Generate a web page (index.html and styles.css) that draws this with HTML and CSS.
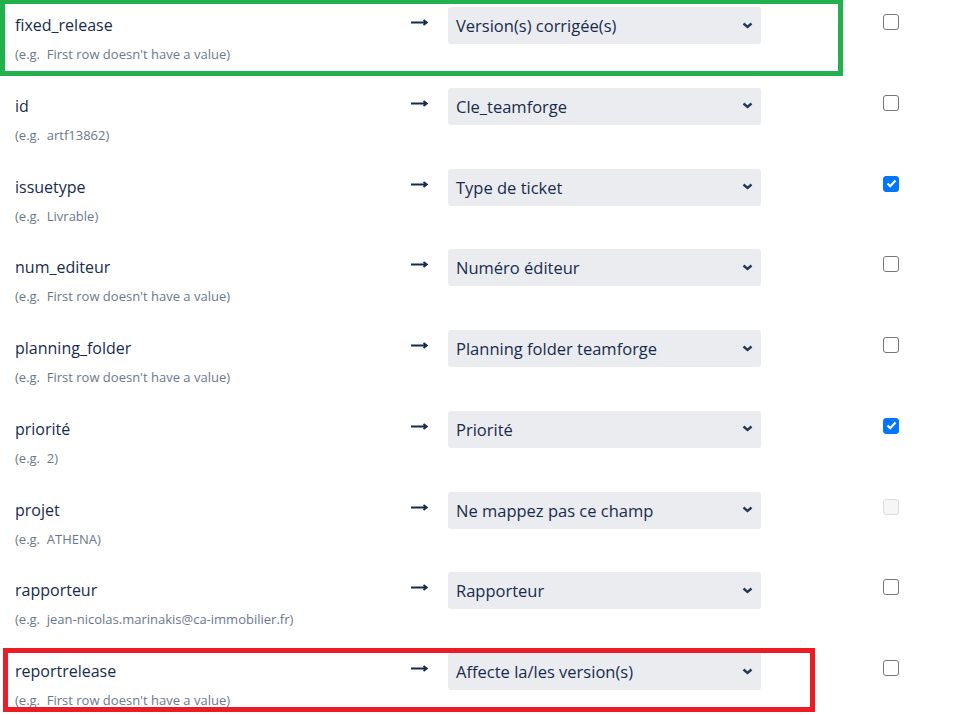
FILE: index.html
```html
<!DOCTYPE html>
<html lang="fr">
<head>
<meta charset="utf-8">
<title>Mappage des champs</title>
<link rel="stylesheet" href="styles.css">
</head>
<body>
<div class="list">
  <div class="row">
    <div class="field"><div class="name">fixed_release</div><div class="hint">(e.g.&nbsp; First row doesn't have a value)</div></div>
    <div class="arrow"><svg width="17" height="9" viewBox="0 0 17 9"><path d="M0 4.5H15.5M12.5 2L15.8 4.5L12.5 7" fill="none" stroke="#172b4d" stroke-width="1.8"/></svg></div>
    <div class="select"><span>Version(s) corrigée(s)</span><svg class="chev" width="11" height="7" viewBox="0 0 11 7"><path d="M1.5 1.5L5.5 5L9.5 1.5" fill="none" stroke="#253858" stroke-width="2.4"/></svg></div>
    <div class="cb"><span class="box"></span></div>
  </div>
  <div class="row">
    <div class="field"><div class="name">id</div><div class="hint">(e.g.&nbsp; artf13862)</div></div>
    <div class="arrow"><svg width="17" height="9" viewBox="0 0 17 9"><path d="M0 4.5H15.5M12.5 2L15.8 4.5L12.5 7" fill="none" stroke="#172b4d" stroke-width="1.8"/></svg></div>
    <div class="select"><span>Cle_teamforge</span><svg class="chev" width="11" height="7" viewBox="0 0 11 7"><path d="M1.5 1.5L5.5 5L9.5 1.5" fill="none" stroke="#253858" stroke-width="2.4"/></svg></div>
    <div class="cb"><span class="box"></span></div>
  </div>
  <div class="row">
    <div class="field"><div class="name">issuetype</div><div class="hint">(e.g.&nbsp; Livrable)</div></div>
    <div class="arrow"><svg width="17" height="9" viewBox="0 0 17 9"><path d="M0 4.5H15.5M12.5 2L15.8 4.5L12.5 7" fill="none" stroke="#172b4d" stroke-width="1.8"/></svg></div>
    <div class="select"><span>Type de ticket</span><svg class="chev" width="11" height="7" viewBox="0 0 11 7"><path d="M1.5 1.5L5.5 5L9.5 1.5" fill="none" stroke="#253858" stroke-width="2.4"/></svg></div>
    <div class="cb"><span class="box checked"><svg width="11" height="9" viewBox="0 0 11 9"><path d="M1.5 4.5L4.2 7.2L9.5 1.5" fill="none" stroke="#fff" stroke-width="2.2"/></svg></span></div>
  </div>
  <div class="row">
    <div class="field"><div class="name">num_editeur</div><div class="hint">(e.g.&nbsp; First row doesn't have a value)</div></div>
    <div class="arrow"><svg width="17" height="9" viewBox="0 0 17 9"><path d="M0 4.5H15.5M12.5 2L15.8 4.5L12.5 7" fill="none" stroke="#172b4d" stroke-width="1.8"/></svg></div>
    <div class="select"><span>Numéro éditeur</span><svg class="chev" width="11" height="7" viewBox="0 0 11 7"><path d="M1.5 1.5L5.5 5L9.5 1.5" fill="none" stroke="#253858" stroke-width="2.4"/></svg></div>
    <div class="cb"><span class="box"></span></div>
  </div>
  <div class="row">
    <div class="field"><div class="name">planning_folder</div><div class="hint">(e.g.&nbsp; First row doesn't have a value)</div></div>
    <div class="arrow"><svg width="17" height="9" viewBox="0 0 17 9"><path d="M0 4.5H15.5M12.5 2L15.8 4.5L12.5 7" fill="none" stroke="#172b4d" stroke-width="1.8"/></svg></div>
    <div class="select"><span>Planning folder teamforge</span><svg class="chev" width="11" height="7" viewBox="0 0 11 7"><path d="M1.5 1.5L5.5 5L9.5 1.5" fill="none" stroke="#253858" stroke-width="2.4"/></svg></div>
    <div class="cb"><span class="box"></span></div>
  </div>
  <div class="row">
    <div class="field"><div class="name">priorité</div><div class="hint">(e.g.&nbsp; 2)</div></div>
    <div class="arrow"><svg width="17" height="9" viewBox="0 0 17 9"><path d="M0 4.5H15.5M12.5 2L15.8 4.5L12.5 7" fill="none" stroke="#172b4d" stroke-width="1.8"/></svg></div>
    <div class="select"><span>Priorité</span><svg class="chev" width="11" height="7" viewBox="0 0 11 7"><path d="M1.5 1.5L5.5 5L9.5 1.5" fill="none" stroke="#253858" stroke-width="2.4"/></svg></div>
    <div class="cb"><span class="box checked"><svg width="11" height="9" viewBox="0 0 11 9"><path d="M1.5 4.5L4.2 7.2L9.5 1.5" fill="none" stroke="#fff" stroke-width="2.2"/></svg></span></div>
  </div>
  <div class="row">
    <div class="field"><div class="name">projet</div><div class="hint">(e.g.&nbsp; ATHENA)</div></div>
    <div class="arrow"><svg width="17" height="9" viewBox="0 0 17 9"><path d="M0 4.5H15.5M12.5 2L15.8 4.5L12.5 7" fill="none" stroke="#172b4d" stroke-width="1.8"/></svg></div>
    <div class="select"><span>Ne mappez pas ce champ</span><svg class="chev" width="11" height="7" viewBox="0 0 11 7"><path d="M1.5 1.5L5.5 5L9.5 1.5" fill="none" stroke="#253858" stroke-width="2.4"/></svg></div>
    <div class="cb"><span class="box disabled"></span></div>
  </div>
  <div class="row">
    <div class="field"><div class="name">rapporteur</div><div class="hint">(e.g.&nbsp; jean-nicolas.marinakis@ca-immobilier.fr)</div></div>
    <div class="arrow"><svg width="17" height="9" viewBox="0 0 17 9"><path d="M0 4.5H15.5M12.5 2L15.8 4.5L12.5 7" fill="none" stroke="#172b4d" stroke-width="1.8"/></svg></div>
    <div class="select"><span>Rapporteur</span><svg class="chev" width="11" height="7" viewBox="0 0 11 7"><path d="M1.5 1.5L5.5 5L9.5 1.5" fill="none" stroke="#253858" stroke-width="2.4"/></svg></div>
    <div class="cb"><span class="box"></span></div>
  </div>
  <div class="row">
    <div class="field"><div class="name">reportrelease</div><div class="hint">(e.g.&nbsp; First row doesn't have a value)</div></div>
    <div class="arrow"><svg width="17" height="9" viewBox="0 0 17 9"><path d="M0 4.5H15.5M12.5 2L15.8 4.5L12.5 7" fill="none" stroke="#172b4d" stroke-width="1.8"/></svg></div>
    <div class="select"><span>Affecte la/les version(s)</span><svg class="chev" width="11" height="7" viewBox="0 0 11 7"><path d="M1.5 1.5L5.5 5L9.5 1.5" fill="none" stroke="#253858" stroke-width="2.4"/></svg></div>
    <div class="cb"><span class="box"></span></div>
  </div>
</div>
<div class="mark mark-green"></div>
<div class="mark mark-red"></div>
</body>
</html>
```

FILE: styles.css
```css
html, body {
  margin: 0;
  padding: 0;
  background: #ffffff;
}
body {
  font-family: "Open Sans", "Noto Sans", "Liberation Sans", sans-serif;
  color: #172b4d;
  position: relative;
  width: 972px;
  height: 715px;
  overflow: hidden;
}
.list {
  padding-left: 15px;
}
.row {
  display: grid;
  grid-template-columns: 396px 37px 313px 1fr;
  height: 80.75px;
  align-items: start;
}
.field {
  padding-top: 14px;
}
.name {
  font-size: 16px;
  line-height: 22px;
  color: #172b4d;
}
.hint {
  margin-top: 10px;
  font-size: 13px;
  line-height: 17px;
  color: #6b778c;
  white-space: nowrap;
}
.arrow {
  padding-top: 18px;
}
.arrow svg {
  display: block;
}
.select {
  margin-top: 7px;
  height: 37px;
  box-sizing: border-box;
  background: #ebecf0;
  border-radius: 3px;
  display: flex;
  align-items: center;
  justify-content: space-between;
  padding: 0 8px 0 8px;
  font-size: 16.5px;
  color: #172b4d;
}
.chev {
  display: block;
  margin-top: -1px;
}
.cb {
  padding-top: 14px;
  padding-left: 122px;
  line-height: 0;
}
.box {
  display: inline-flex;
  align-items: center;
  justify-content: center;
  width: 16px;
  height: 16px;
  box-sizing: border-box;
  border: 1.5px solid #767676;
  border-radius: 3px;
  background: #fff;
}
.box.checked {
  background: #0075ff;
  border-color: #0075ff;
}
.box.disabled {
  border-color: #dcdcdc;
  background: #f6f6f6;
}
.mark {
  position: absolute;
  box-sizing: border-box;
  pointer-events: none;
}
.mark-green {
  left: 0;
  top: 0;
  width: 843px;
  height: 76px;
  border: 5px solid #22b14c;
  border-top-width: 4px;
}
.mark-red {
  left: 3px;
  top: 648px;
  width: 812px;
  height: 64px;
  border: 5px solid #ed1c24;
}
```
